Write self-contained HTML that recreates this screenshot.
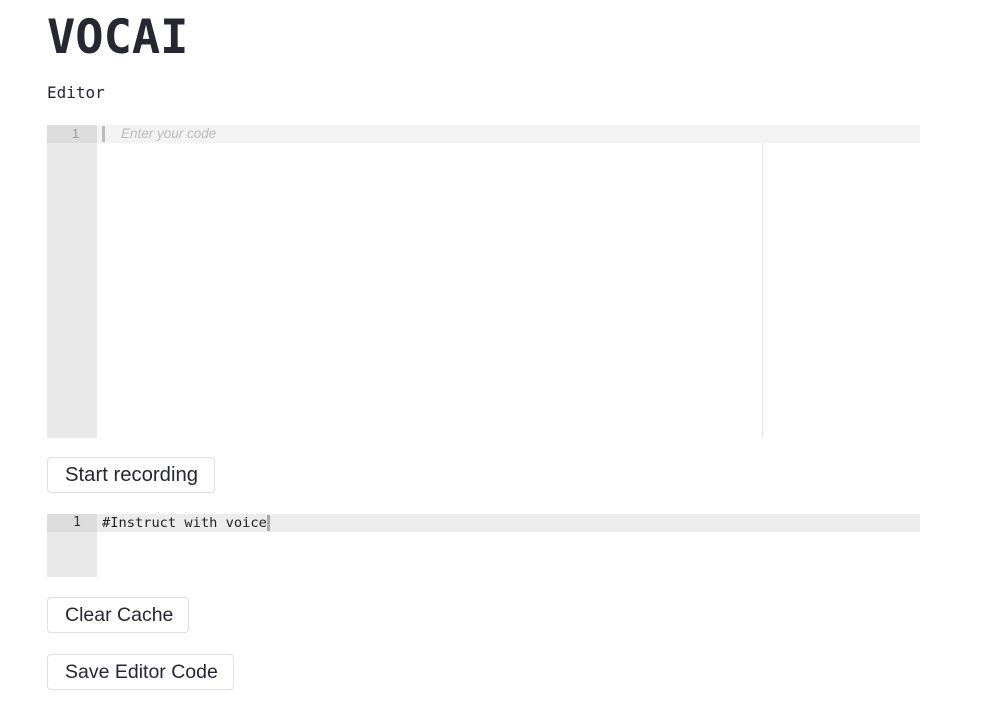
<!DOCTYPE html>
<html><head><style>
body{margin:0;background:#fff;width:990px;height:706px;position:relative;overflow:hidden;font-family:"Liberation Sans",sans-serif}
.a{position:absolute;white-space:nowrap}
.btn{position:absolute;white-space:nowrap;left:47px;border:1px solid #e0e0e4;border-radius:4px;background:#fff;font-size:20.3px;color:#262730;line-height:34px;padding:0 17px;box-sizing:border-box;height:36px}
</style></head><body>
<div class="a" style="left:47px;top:10px;font:bold 47px 'DejaVu Sans Mono','Liberation Mono',monospace;color:#262730;letter-spacing:0px">VOCAI</div>
<div class="a" style="left:47px;top:83px;font:16px 'DejaVu Sans Mono','Liberation Mono',monospace;color:#262730">Editor</div>
<div class="a" style="left:47px;top:125px;width:50px;height:313px;background:#e8e8e8"></div>
<div class="a" style="left:47px;top:125px;width:873px;height:18px;background:#f3f3f3"></div>
<div class="a" style="left:47px;top:125px;width:50px;height:18px;background:#dcdcdc;color:#999;font-size:13px;text-align:center;line-height:18px">&nbsp;&nbsp;1</div>
<div class="a" style="left:102px;top:126px;width:3px;height:16px;background:#bbb"></div>
<div class="a" style="left:121px;top:125px;font:italic 13.5px 'Liberation Sans',sans-serif;color:#bbb;line-height:18px">Enter your code</div>
<div class="a" style="left:762px;top:143px;width:1px;height:295px;background:#e6e6e6"></div>
<div class="btn" style="top:457px;width:168px">Start recording</div>
<div class="a" style="left:47px;top:514px;width:50px;height:63px;background:#e8e8e8"></div>
<div class="a" style="left:47px;top:514px;width:873px;height:18px;background:#ececec"></div>
<div class="a" style="left:47px;top:514px;width:50px;height:18px;background:#dcdcdc;color:#333;font:13px 'DejaVu Sans Mono',monospace;line-height:18px;text-align:right;box-sizing:border-box;padding-right:16px">1</div>
<div class="a" style="left:102px;top:514px;font:13.7px 'DejaVu Sans Mono',monospace;color:#222;line-height:18px">#Instruct with voice</div>
<div class="a" style="left:267px;top:515px;width:3px;height:16px;background:#aaa"></div>
<div class="btn" style="top:597px;width:142px;font-size:19.5px">Clear Cache</div>
<div class="btn" style="top:654px;width:187px;font-size:19.5px">Save Editor Code</div>
</body></html>
